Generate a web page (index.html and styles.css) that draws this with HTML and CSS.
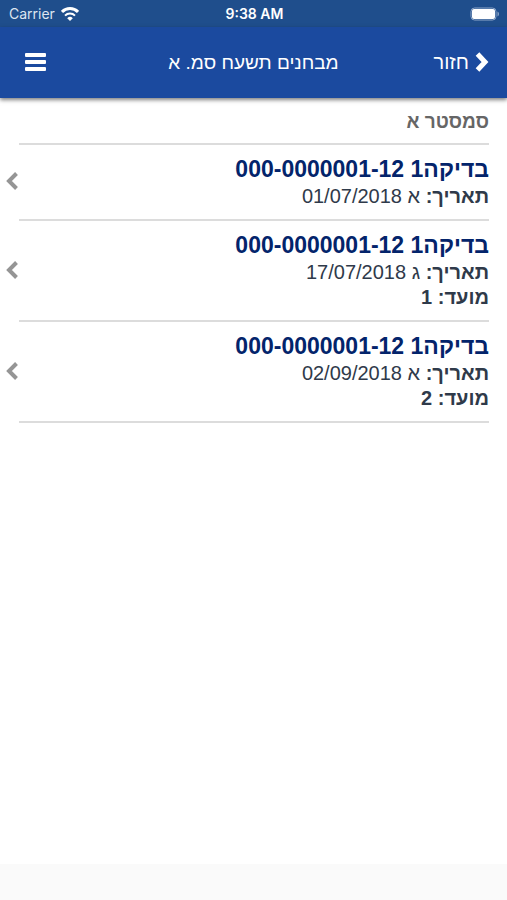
FILE: index.html
```html
<!DOCTYPE html>
<html lang="he" dir="rtl">
<head>
  <meta charset="utf-8">
  <meta name="viewport" content="width=device-width, initial-scale=1">
  <title>מבחנים תשעח סמ. א</title>
  <link rel="stylesheet" href="styles.css">
</head>
<body>
  <div class="status-bar" dir="ltr">
    <div class="carrier">
      <span>Carrier</span>
      <svg width="18" height="14" viewBox="0 0 18 14" fill="none" stroke="#fff" stroke-width="3">
        <path d="M1 4.9a11.4 11.4 0 0 1 16 0"/>
        <path d="M4 8.6a7.1 7.1 0 0 1 10 0" stroke-width="2"/>
        <path d="M9 14 6.2 11.2a4 4 0 0 1 5.6 0z" fill="#fff" stroke="none"/>
      </svg>
    </div>
    <div class="time">9:38 AM</div>
    <div class="battery">
      <svg width="30" height="14" viewBox="0 0 30 14">
        <rect x="1" y="1" width="25" height="12" rx="3.5" fill="none" stroke="#8fa7c9"/>
        <rect x="2" y="2" width="23" height="10" rx="2" fill="#fff"/>
        <path d="M27.5 4.5v5c2-1 2-4 0-5z" fill="#8fa7c9"/>
      </svg>
    </div>
  </div>
  <header class="header">
    <button class="back">
      <svg width="14" height="20" viewBox="0 0 14 20" fill="none" stroke="#fff" stroke-width="5">
        <path d="M2.5 2 10 10 2.5 18"/>
      </svg>
      חזור
    </button>
    <h1 class="title">מבחנים תשעח סמ. א</h1>
    <button class="menu" aria-label="תפריט">
      <svg width="21" height="18" viewBox="0 0 21 18" fill="#fff">
        <rect width="21" height="4" rx="1"/>
        <rect y="7" width="21" height="4" rx="1"/>
        <rect y="14" width="21" height="4" rx="1"/>
      </svg>
    </button>
  </header>
  <main class="content">
    <h2 class="semester">סמסטר א</h2>
    <ul class="exams">
      <li>
        <a class="exam" href="#">
          <div class="details">
            <h3>בדיקה1 000-0000001-12</h3>
            <p><b>תאריך:</b> א 01/07/2018</p>
          </div>
          <svg class="arrow" width="12" height="18" viewBox="0 0 12 18"><path d="M10.5 1.5 3 9l7.5 7.5"/></svg>
        </a>
      </li>
      <li>
        <a class="exam" href="#">
          <div class="details">
            <h3>בדיקה1 000-0000001-12</h3>
            <p><b>תאריך:</b> ג 17/07/2018</p>
            <p><b>מועד: 1</b></p>
          </div>
          <svg class="arrow" width="12" height="18" viewBox="0 0 12 18"><path d="M10.5 1.5 3 9l7.5 7.5"/></svg>
        </a>
      </li>
      <li>
        <a class="exam" href="#">
          <div class="details">
            <h3>בדיקה1 000-0000001-12</h3>
            <p><b>תאריך:</b> א 02/09/2018</p>
            <p><b>מועד: 2</b></p>
          </div>
          <svg class="arrow" width="12" height="18" viewBox="0 0 12 18"><path d="M10.5 1.5 3 9l7.5 7.5"/></svg>
        </a>
      </li>
    </ul>
  </main>
  <footer class="footer"></footer>
</body>
</html>
```

FILE: styles.css
```css
* {
    box-sizing: border-box;
}
body {
    margin: 0;
    min-height: 100vh;
    display: flex;
    flex-direction: column;
    font-family: "Liberation Sans", Arial, sans-serif;
    background-color: #fff;
    color: #2f3a4a;
}
h1, h2, h3, p, ul {
    margin: 0;
    padding: 0;
}
button {
    border: none;
    background: none;
    padding: 0;
    color: inherit;
    font: inherit;
}

/* status bar */
.status-bar {
    display: grid;
    grid-template-columns: 1fr auto 1fr;
    align-items: center;
    height: 27px;
    padding: 0 7px 0 9px;
    background-color: #1f4e8c;
    color: #fff;
    font-family: Inter, "Liberation Sans", sans-serif;
    font-size: 14px;
}
.carrier {
    display: flex;
    align-items: center;
    gap: 6px;
    color: #dde5f0;
}
.time {
    font-weight: 600;
}
.battery {
    display: flex;
    justify-content: flex-end;
}

/* header */
.header {
    display: grid;
    grid-template-columns: 1fr auto 1fr;
    align-items: center;
    height: 71px;
    padding: 0 18px;
    background-color: #1b4a9f;
    color: #fff;
    box-shadow: 0 2px 4px rgba(0,0,0,0.5);
    font-size: 20px;
}
.header svg {
    margin-bottom: 2px;
}
.back {
    display: flex;
    align-items: center;
    justify-self: start;
    gap: 6px;
}
.title {
    font-size: 19px;
    font-weight: normal;
}
.menu {
    display: flex;
    justify-self: end;
    padding-left: 7px;
}

/* exam list */
.content {
    flex: 1;
    padding: 0 18px 0 19px;
}
.semester {
    padding: 11px 0 9px;
    border-bottom: 2px solid #dcdcdc;
    font-size: 19px;
    line-height: 25px;
    color: #666;
}
.exams {
    list-style: none;
}
.exam {
    display: flex;
    align-items: center;
    justify-content: space-between;
    padding: 10px 0;
    border-bottom: 2px solid #dcdcdc;
    color: inherit;
    text-decoration: none;
}
.exam h3 {
    margin-bottom: 1px;
    font-size: 23px;
    line-height: 28px;
    color: #03246b;
}
.exam p {
    font-size: 20px;
    line-height: 25px;
}
.arrow {
    margin: 0 0 2px -13px;
    fill: none;
    stroke: #959595;
    stroke-width: 4;
}
.footer {
    height: 36px;
    background-color: #fafafa;
}
```
